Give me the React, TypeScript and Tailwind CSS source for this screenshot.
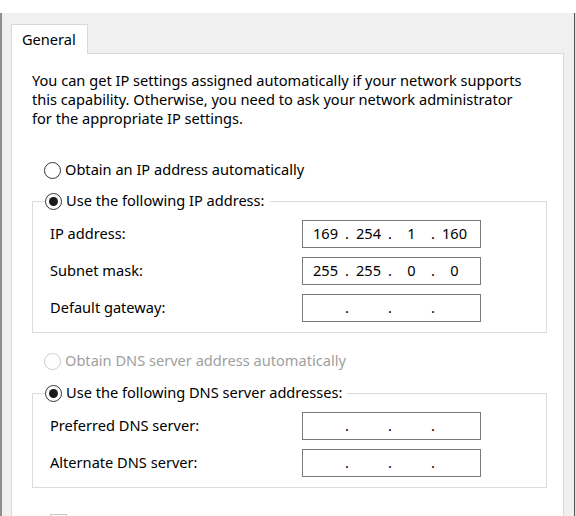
import { Fragment } from 'react';

const font = { fontFamily: '"Noto Sans", "Liberation Sans", sans-serif' };

function Radio({ checked = false, disabled = false }: { checked?: boolean; disabled?: boolean }) {
  return (
    <span
      className={`w-[17px] h-[17px] shrink-0 rounded-full border bg-white flex items-center justify-center ${
        disabled ? 'border-[#cccccc]' : 'border-[#333333]'
      }`}
    >
      {checked && <span className="w-[9px] h-[9px] rounded-full bg-[#1a1a1a]" />}
    </span>
  );
}

function IpBox({ parts }: { parts: string[] }) {
  return (
    <div className="w-[179px] h-[28px] border border-[#7a7a7a] bg-white flex items-center pl-[4px]">
      {parts.map((p, i) => (
        <Fragment key={i}>
          {i > 0 && <span className="w-[6px] text-center">.</span>}
          <span className="w-[37px] text-center">{p}</span>
        </Fragment>
      ))}
    </div>
  );
}

function Row({ label, parts }: { label: string; parts: string[] }) {
  return (
    <div className="flex items-center h-[28px]">
      <span className="w-[252px]">{label}</span>
      <IpBox parts={parts} />
    </div>
  );
}

function Group({ title, rows }: { title: string; rows: { label: string; parts: string[] }[] }) {
  return (
    <fieldset className="border border-[#dcdcdc] pl-[17px] pt-[9px] pb-[10px]">
      {/* legend sits after the fieldset padding, pull it back to the radio column */}
      <legend className="-ml-[5px] pr-[5px] h-[20px] flex items-center gap-[4px]">
        <Radio checked />
        <span>{title}</span>
      </legend>
      <div className="flex flex-col gap-[9px]">
        {rows.map((r) => (
          <Row key={r.label} label={r.label} parts={r.parts} />
        ))}
      </div>
    </fieldset>
  );
}

export default function App() {
  const empty = ['', '', '', ''];
  return (
    <div className="w-[576px] h-[516px] overflow-hidden flex flex-col text-[14.6px] text-black bg-white" style={font}>
      {/* title bar remnant */}
      <div className="h-[13px] bg-white shrink-0" />

      <div className="flex flex-1 min-h-0">
        <div className="w-[2px] bg-[#8f8f8f] shrink-0" />
        <div className="flex-1 bg-[#f0f0f0] pt-[11px] pl-[9px] pr-[10px] flex flex-col min-h-0">
          {/* tabs */}
          <div className="flex">
            <div className="h-[30px] -mb-px relative z-10 bg-white border border-b-0 border-[#d9d9d9] pl-[10px] pr-[11px] pt-[4px] leading-[20px]">
              General
            </div>
          </div>

          {/* panel */}
          <div className="flex-1 bg-white border border-[#d9d9d9] pl-[20px] pr-[16px] pt-[17px]">
            <p className="leading-[19px]">
              You can get IP settings assigned automatically if your network supports
              <br />
              this capability. Otherwise, you need to ask your network administrator
              <br />
              for the appropriate IP settings.
            </p>

            <div className="mt-[32px] ml-[12px] h-[20px] flex items-center gap-[4px]">
              <Radio />
              <span>Obtain an IP address automatically</span>
            </div>

            <div className="mt-[11px]">
              <Group
                title="Use the following IP address:"
                rows={[
                  { label: 'IP address:', parts: ['169', '254', '1', '160'] },
                  { label: 'Subnet mask:', parts: ['255', '255', '0', '0'] },
                  { label: 'Default gateway:', parts: empty },
                ]}
              />
            </div>

            <div className="mt-[18px] ml-[12px] h-[20px] flex items-center gap-[4px] text-[#a0a0a0]">
              <Radio disabled />
              <span>Obtain DNS server address automatically</span>
            </div>

            <div className="mt-[12px]">
              <Group
                title="Use the following DNS server addresses:"
                rows={[
                  { label: 'Preferred DNS server:', parts: empty },
                  { label: 'Alternate DNS server:', parts: empty },
                ]}
              />
            </div>

            <div className="mt-[26px] ml-[18px] w-[17px] h-[17px] border border-[#c8c8c8] bg-white" />
          </div>
        </div>
        <div className="w-px bg-[#555555] shrink-0" />
        <div className="w-px bg-[#e0e0e0] shrink-0" />
      </div>
    </div>
  );
}
